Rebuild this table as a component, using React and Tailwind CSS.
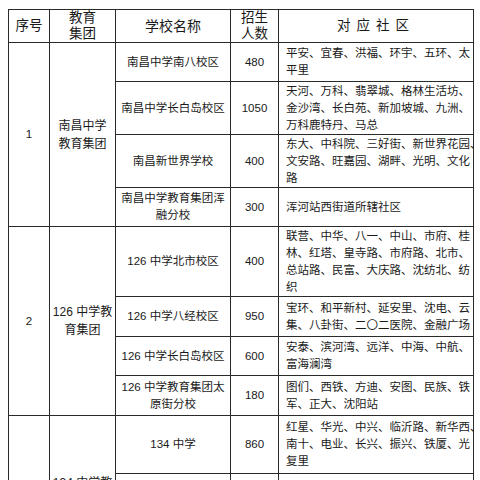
const rows = [
  { h: 'h-[39px]', school: ['南昌中学南八校区'], num: '480', area: ['平安、宜春、洪福、环宇、五环、太', '平里'] },
  { h: 'h-[53px]', school: ['南昌中学长白岛校区'], num: '1050', area: ['天河、万科、翡翠城、格林生活坊、', '金沙湾、长白苑、新加坡城、九洲、', '万科鹿特丹、马总'] },
  { h: 'h-[53px]', school: ['南昌新世界学校'], num: '400', area: ['东大、中科院、三好街、新世界花园、', '文安路、旺嘉园、湖畔、光明、文化', '路'] },
  { h: 'h-[39px]', school: ['南昌中学教育集团浑', '融分校'], num: '300', area: ['浑河站西街道所辖社区'] },
  { h: 'h-[70px]', school: ['126 中学北市校区'], num: '400', area: ['联营、中华、八一、中山、市府、桂', '林、红塔、皇寺路、市府路、北市、', '总站路、民富、大庆路、沈纺北、纺', '织'] },
  { h: 'h-[40px]', school: ['126 中学八经校区'], num: '950', area: ['宝环、和平新村、延安里、沈电、云', '集、八卦街、二〇二医院、金融广场'] },
  { h: 'h-[39px]', school: ['126 中学长白岛校区'], num: '600', area: ['安泰、滨河湾、远洋、中海、中航、', '富海澜湾'] },
  { h: 'h-[40px]', school: ['126 中学教育集团太', '原街分校'], num: '180', area: ['图们、西铁、方迪、安图、民族、铁', '军、正大、沈阳站'] },
  { h: 'h-[58px]', school: ['134 中学'], num: '860', area: ['红星、华光、中兴、临沂路、新华西、', '南十、电业、长兴、振兴、铁厦、光', '复里'] },
  { h: 'h-[94px]', school: ['134 中学教育集团分校'], num: '700', area: ['鑫贸、建科、南九、辽贡、丰泽、彩', '霞、砂山、五里河、富民、南湖、', '三好、文艺、青年、新兴'] },
];

const groups = [
  { no: '1', name: ['南昌中学', '教育集团'], start: 0, span: 4 },
  { no: '2', name: ['126 中学教', '育集团'], start: 4, span: 4 },
  { no: '3', name: ['134 中学教', '育集团'], start: 8, span: 2 },
];

function Lines({ lines }) {
  return lines.map((l, i) => (
    <span key={i} className="block whitespace-nowrap">{l}</span>
  ));
}

export default function App() {
  const cell = 'border border-[#2a2a2a] p-0 align-middle';
  return (
    <div className="w-[480px] h-[480px] overflow-hidden bg-white pl-[8px] pt-[9px] text-[#1a1a1a] font-['Liberation_Sans','Noto_Sans_CJK_SC',sans-serif]">
      <table className="table-fixed border-collapse w-[465px] text-[11.5px] leading-[17px]">
        <colgroup>
          <col className="w-[41px]" />
          <col className="w-[66px]" />
          <col className="w-[115px]" />
          <col className="w-[48px]" />
          <col className="w-[195px]" />
        </colgroup>
        <thead>
          <tr className="h-[32px] text-[13.5px] leading-[16px]">
            <th className={`${cell} font-normal text-center`}>序号</th>
            <th className={`${cell} font-normal text-center`}>教育<br />集团</th>
            <th className={`${cell} font-normal text-center text-[14px]`}>学校名称</th>
            <th className={`${cell} font-normal text-center`}>招生<br />人数</th>
            <th className={`${cell} font-normal text-center tracking-[6px]`}>对应社区</th>
          </tr>
        </thead>
        <tbody>
          {rows.map((r, i) => {
            const g = groups.find((x) => x.start === i);
            return (
              <tr key={i} className={r.h}>
                {g && (
                  <>
                    <td rowSpan={g.span} className={`${cell} text-center`}>{g.no}</td>
                    <td rowSpan={g.span} className={`${cell} text-center text-[12px] leading-[18px]`}>
                      <Lines lines={g.name} />
                    </td>
                  </>
                )}
                <td className={`${cell} text-center`}><Lines lines={r.school} /></td>
                <td className={`${cell} text-center`}>{r.num}</td>
                <td className={`${cell} pl-[7px] text-left`}><Lines lines={r.area} /></td>
              </tr>
            );
          })}
        </tbody>
      </table>
    </div>
  );
}
